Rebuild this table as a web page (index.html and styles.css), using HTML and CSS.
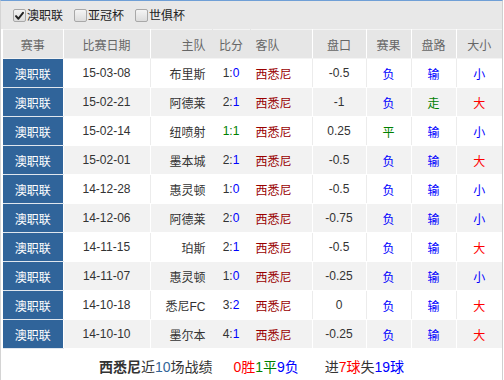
FILE: index.html
```html
<!DOCTYPE html>
<html lang="zh-CN">
<head>
<meta charset="utf-8">
<link rel="stylesheet" href="styles.css">
</head>
<body>
<div class="panel">
  <div class="filters">
    <label class="opt"><span class="box checked"><svg viewBox="0 0 12 12" width="12" height="12"><path d="M2.2 6.2 L4.8 9 L9.8 2.6" fill="none" stroke="#222" stroke-width="2.2" stroke-linecap="round" stroke-linejoin="round"/></svg></span>澳职联</label>
    <label class="opt"><span class="box"></span>亚冠杯</label>
    <label class="opt"><span class="box"></span>世俱杯</label>
  </div>
  <table class="grid">
    <colgroup>
      <col class="c-lg"><col class="c-date"><col class="c-home"><col class="c-score"><col class="c-away"><col class="c-hcp"><col class="c-res"><col class="c-res"><col class="c-ou">
    </colgroup>
    <thead>
      <tr>
        <th>赛事</th><th>比赛日期</th><th class="home">主队</th><th class="score">比分</th><th class="away">客队</th><th>盘口</th><th>赛果</th><th>盘路</th><th>大小</th>
      </tr>
    </thead>
    <tbody>
      <tr><td class="lg">澳职联</td><td>15-03-08</td><td class="home">布里斯</td><td class="score">1:<span class="bl">0</span></td><td class="away">西悉尼</td><td>-0.5</td><td class="bl">负</td><td class="bl">输</td><td class="bl">小</td></tr>
      <tr><td class="lg">澳职联</td><td>15-02-21</td><td class="home">阿德莱</td><td class="score">2:<span class="bl">1</span></td><td class="away">西悉尼</td><td>-1</td><td class="bl">负</td><td class="gr">走</td><td class="rd">大</td></tr>
      <tr><td class="lg">澳职联</td><td>15-02-14</td><td class="home">纽喷射</td><td class="score gr">1:1</td><td class="away">西悉尼</td><td>0.25</td><td class="gr">平</td><td class="bl">输</td><td class="bl">小</td></tr>
      <tr><td class="lg">澳职联</td><td>15-02-01</td><td class="home">墨本城</td><td class="score">2:<span class="bl">1</span></td><td class="away">西悉尼</td><td>-0.5</td><td class="bl">负</td><td class="bl">输</td><td class="rd">大</td></tr>
      <tr><td class="lg">澳职联</td><td>14-12-28</td><td class="home">惠灵顿</td><td class="score">1:<span class="bl">0</span></td><td class="away">西悉尼</td><td>-0.5</td><td class="bl">负</td><td class="bl">输</td><td class="bl">小</td></tr>
      <tr><td class="lg">澳职联</td><td>14-12-06</td><td class="home">阿德莱</td><td class="score">2:<span class="bl">0</span></td><td class="away">西悉尼</td><td>-0.75</td><td class="bl">负</td><td class="bl">输</td><td class="bl">小</td></tr>
      <tr><td class="lg">澳职联</td><td>14-11-15</td><td class="home">珀斯</td><td class="score">2:<span class="bl">1</span></td><td class="away">西悉尼</td><td>-0.5</td><td class="bl">负</td><td class="bl">输</td><td class="rd">大</td></tr>
      <tr><td class="lg">澳职联</td><td>14-11-07</td><td class="home">惠灵顿</td><td class="score">1:<span class="bl">0</span></td><td class="away">西悉尼</td><td>-0.25</td><td class="bl">负</td><td class="bl">输</td><td class="bl">小</td></tr>
      <tr><td class="lg">澳职联</td><td>14-10-18</td><td class="home">悉尼FC</td><td class="score">3:<span class="bl">2</span></td><td class="away">西悉尼</td><td>0</td><td class="bl">负</td><td class="bl">输</td><td class="rd">大</td></tr>
      <tr><td class="lg">澳职联</td><td>14-10-10</td><td class="home">墨尔本</td><td class="score">4:<span class="bl">1</span></td><td class="away">西悉尼</td><td>-0.25</td><td class="bl">负</td><td class="bl">输</td><td class="rd">大</td></tr>
    </tbody>
  </table>
  <div class="summary">
    <b>西悉尼</b>近<span class="tn">10</span>场战绩
    <span class="part"><span class="rd">0胜</span><span class="gr">1平</span><span class="bl">9负</span></span>
    <span class="part">进<span class="rd">7球</span>失<span class="bl">19球</span></span>
  </div>
</div>
</body>
</html>
```

FILE: styles.css
```css
html, body {
  margin: 0;
  padding: 0;
  background: #fff;
}

body {
  font-family: "Liberation Sans", "Noto Sans CJK SC", sans-serif;
  font-size: 12px;
  color: #333;
}

.panel {
  width: 503px;
  box-sizing: border-box;
  border-top: 1px solid #6f9fd6;
  border-left: 1px solid #d4d4d4;
  border-right: 1px solid #cfcfcf;
  background: #fff;
}

.filters {
  height: 28px;
  background: #e8e8e8;
  display: flex;
  align-items: center;
  padding-left: 12px;
  gap: 11px;
  box-sizing: border-box;
  padding-top: 1px;
}

.opt {
  display: flex;
  align-items: center;
  color: #222;
  font-size: 12px;
  line-height: 14px;
}

.box {
  width: 11px;
  height: 11px;
  border: 1px solid #a8a8a8;
  border-radius: 2px;
  background: linear-gradient(#f4f4f4, #dcdcdc);
  margin-right: 1px;
  display: flex;
  align-items: center;
  justify-content: center;
}

.box svg {
  display: block;
}

.grid {
  margin-left: 2px;
  width: 499px;
  table-layout: fixed;
  border-collapse: collapse;
}

.c-lg { width: 60px; }
.c-date { width: 87px; }
.c-home { width: 62px; }
.c-score { width: 38px; }
.c-away { width: 62px; }
.c-hcp { width: 54px; }
.c-res { width: 45px; }
.c-ou { width: 46px; }

.grid th {
  height: 28px;
  padding: 0;
  background: #e6e6e6;
  color: #666;
  font-weight: normal;
  font-size: 12px;
  text-align: center;
  border-top: 1px solid #f4f4f4;
  border-right: 1px solid #fff;
  border-bottom: 1px solid #f4f4f4;
}

.grid th.home,
.grid th.score {
  border-right-color: #e6e6e6;
}

.grid td {
  height: 28px;
  padding: 0;
  text-align: center;
  white-space: nowrap;
  border-right: 1px solid #ececec;
  border-bottom: 1px solid #fff;
}

.grid tbody tr:nth-child(even) td {
  background: #f2f2f2;
  border-right-color: #fff;
}

.grid td.home,
.grid td.score,
.grid tbody tr:nth-child(even) td.home,
.grid tbody tr:nth-child(even) td.score {
  border-right-color: transparent;
}

.grid th:last-child,
.grid td:last-child {
  border-right: none;
}

.grid .home {
  text-align: right;
  padding-right: 6px;
}

.grid .away {
  text-align: left;
  padding-left: 5px;
}

.grid td.away {
  color: #990000;
}

.grid td.lg,
.grid tbody tr:nth-child(even) td.lg {
  background: #30649a;
  color: #fff;
  border-bottom-color: #dfe6ee;
  border-right-color: #fff;
}

.bl { color: #0000ff; }
.rd { color: #ff0000; }
.gr { color: #008000; }

.grid td.bl { color: #0000ff; }
.grid td.rd { color: #ff0000; }
.grid td.gr { color: #008000; }

.summary {
  height: 31px;
  line-height: 18px;
  padding-top: 9px;
  box-sizing: border-box;
  text-align: center;
  font-size: 14px;
  color: #333;
}

.summary b {
  font-weight: bold;
}

.summary .tn {
  color: #336699;
}

.summary .part {
  margin-left: 17px;
}

.summary .part + .part {
  margin-left: 22px;
}
```
